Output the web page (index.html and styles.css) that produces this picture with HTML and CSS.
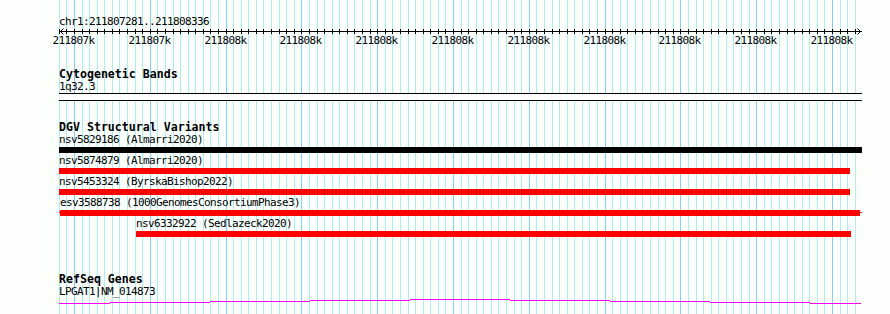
FILE: index.html
```html
<!DOCTYPE html>
<html lang="en">
<head>
<meta charset="utf-8">
<title>Genome browser</title>
<link rel="stylesheet" href="styles.css">
</head>
<body>
<div class="view">
  <svg class="grid" width="890" height="314" viewBox="0 0 890 314" aria-hidden="true">
    <path class="grid-minor" d="M59.5 0V314M66.5 0V314M82.5 0V314M89.5 0V314M97.5 0V314M104.5 0V314M112.5 0V314M119.5 0V314M127.5 0V314M135.5 0V314M142.5 0V314M157.5 0V314M165.5 0V314M173.5 0V314M180.5 0V314M188.5 0V314M195.5 0V314M203.5 0V314M210.5 0V314M218.5 0V314M233.5 0V314M241.5 0V314M248.5 0V314M256.5 0V314M263.5 0V314M271.5 0V314M279.5 0V314M286.5 0V314M294.5 0V314M309.5 0V314M317.5 0V314M324.5 0V314M332.5 0V314M339.5 0V314M347.5 0V314M354.5 0V314M362.5 0V314M370.5 0V314M385.5 0V314M392.5 0V314M400.5 0V314M408.5 0V314M415.5 0V314M423.5 0V314M430.5 0V314M438.5 0V314M445.5 0V314M461.5 0V314M468.5 0V314M476.5 0V314M483.5 0V314M491.5 0V314M498.5 0V314M506.5 0V314M514.5 0V314M521.5 0V314M536.5 0V314M544.5 0V314M552.5 0V314M559.5 0V314M567.5 0V314M574.5 0V314M582.5 0V314M589.5 0V314M597.5 0V314M612.5 0V314M620.5 0V314M627.5 0V314M635.5 0V314M642.5 0V314M650.5 0V314M658.5 0V314M665.5 0V314M673.5 0V314M688.5 0V314M696.5 0V314M703.5 0V314M711.5 0V314M718.5 0V314M726.5 0V314M733.5 0V314M741.5 0V314M749.5 0V314M764.5 0V314M771.5 0V314M779.5 0V314M787.5 0V314M794.5 0V314M802.5 0V314M809.5 0V314M817.5 0V314M824.5 0V314M840.5 0V314M847.5 0V314M855.5 0V314"/>
    <path class="grid-major" d="M74.5 0V314M150.5 0V314M226.5 0V314M301.5 0V314M377.5 0V314M453.5 0V314M529.5 0V314M605.5 0V314M680.5 0V314M756.5 0V314M832.5 0V314"/>
  </svg>

  <div class="tracks">
    <div class="locus">chr1:211807281..211808336</div>

    <svg class="ruler" width="803" height="20" viewBox="59 28 803 20">
      <path class="ruler-axis" d="M59 31.5H862M63.5 28.5L60.5 31.5L63.5 34.5M857.5 28.5L860.5 31.5L857.5 34.5"/>
      <path class="ruler-ticks" d="M59.5 29V34M66.5 29V34M74.5 29V34M82.5 29V34M89.5 29V34M97.5 29V34M104.5 29V34M112.5 29V34M119.5 29V34M127.5 29V34M135.5 29V34M142.5 29V34M150.5 29V34M157.5 29V34M165.5 29V34M173.5 29V34M180.5 29V34M188.5 29V34M195.5 29V34M203.5 29V34M210.5 29V34M218.5 29V34M226.5 29V34M233.5 29V34M241.5 29V34M248.5 29V34M256.5 29V34M263.5 29V34M271.5 29V34M279.5 29V34M286.5 29V34M294.5 29V34M301.5 29V34M309.5 29V34M317.5 29V34M324.5 29V34M332.5 29V34M339.5 29V34M347.5 29V34M354.5 29V34M362.5 29V34M370.5 29V34M377.5 29V34M385.5 29V34M392.5 29V34M400.5 29V34M408.5 29V34M415.5 29V34M423.5 29V34M430.5 29V34M438.5 29V34M445.5 29V34M453.5 29V34M461.5 29V34M468.5 29V34M476.5 29V34M483.5 29V34M491.5 29V34M498.5 29V34M506.5 29V34M514.5 29V34M521.5 29V34M529.5 29V34M536.5 29V34M544.5 29V34M552.5 29V34M559.5 29V34M567.5 29V34M574.5 29V34M582.5 29V34M589.5 29V34M597.5 29V34M605.5 29V34M612.5 29V34M620.5 29V34M627.5 29V34M635.5 29V34M642.5 29V34M650.5 29V34M658.5 29V34M665.5 29V34M673.5 29V34M680.5 29V34M688.5 29V34M696.5 29V34M703.5 29V34M711.5 29V34M718.5 29V34M726.5 29V34M733.5 29V34M741.5 29V34M749.5 29V34M756.5 29V34M764.5 29V34M771.5 29V34M779.5 29V34M787.5 29V34M794.5 29V34M802.5 29V34M809.5 29V34M817.5 29V34M824.5 29V34M832.5 29V34M840.5 29V34M847.5 29V34M855.5 29V34"/>
      <g class="ruler-labels">
        <text x="52.5" y="44">211807k</text>
        <text x="128.5" y="44">211807k</text>
        <text x="204.5" y="44">211808k</text>
        <text x="279.5" y="44">211808k</text>
        <text x="355.5" y="44">211808k</text>
        <text x="431.5" y="44">211808k</text>
        <text x="507.5" y="44">211808k</text>
        <text x="583.5" y="44">211808k</text>
        <text x="658.5" y="44">211808k</text>
        <text x="734.5" y="44">211808k</text>
        <text x="810.5" y="44">211808k</text>
      </g>
    </svg>

    <section class="track track-cyto">
      <h2 class="track-title">Cytogenetic Bands</h2>
      <div class="label label-tight">1q32.3</div>
      <div class="band"></div>
    </section>

    <section class="track track-dgv">
      <h2 class="track-title">DGV Structural Variants</h2>
      <div class="feature" style="margin-left:0px">
        <div class="label">nsv5829186 (Almarri2020)</div>
        <div class="bar bar-black" style="width:803px"></div>
      </div>
      <div class="feature" style="margin-left:0px">
        <div class="label">nsv5874879 (Almarri2020)</div>
        <div class="bar" style="width:791px"></div>
      </div>
      <div class="feature" style="margin-left:0px">
        <div class="label">nsv5453324 (ByrskaBishop2022)</div>
        <div class="bar" style="width:791px"></div>
      </div>
      <div class="feature" style="margin-left:0px">
        <div class="label label-inset">esv3588738 (1000GenomesConsortiumPhase3)</div>
        <div class="bar bar-overflow" style="width:803px"><div class="bar-core"></div></div>
      </div>
      <div class="feature" style="margin-left:77px">
        <div class="label">nsv6332922 (Sedlazeck2020)</div>
        <div class="bar" style="width:715px"></div>
      </div>
    </section>

    <section class="track track-refseq">
      <h2 class="track-title">RefSeq Genes</h2>
      <div class="label">LPGAT1|NM_014873</div>
      <svg class="gene" width="803" height="8" viewBox="59 298 803 8">
        <path class="gene-line" d="M59 303.5H110M110 302.5H210M210 301.5H310M310 300.5H410M410 299.5H510M510 300.5H610M610 301.5H710M710 302.5H810M810 303.5H861"/>
      </svg>
    </section>
  </div>
</div>
</body>
</html>
```

FILE: styles.css
```css
html, body {
  margin: 0;
  padding: 0;
  background: #fdfffd;
}

.view {
  position: relative;
  width: 890px;
  height: 314px;
  overflow: hidden;
  font-family: "DejaVu Sans Mono", "Liberation Mono", monospace;
  color: #000;
}

.grid {
  position: absolute;
  left: 0;
  top: 0;
  z-index: 0;
}

.grid-minor {
  stroke: #afeeee;
  stroke-width: 1;
  fill: none;
  shape-rendering: crispEdges;
}

.grid-major {
  stroke: #87cefa;
  stroke-width: 1;
  fill: none;
  shape-rendering: crispEdges;
}

.tracks {
  position: relative;
  z-index: 1;
  display: flex;
  flex-direction: column;
  align-items: flex-start;
  width: 803px;
  padding-left: 59px;
}

.locus {
  padding-top: 16px;
  font-size: 11px;
  letter-spacing: -0.62px;
  line-height: 12px;
  white-space: nowrap;
}

.ruler {
  display: block;
  overflow: visible;
}

.ruler-axis {
  stroke: #000;
  stroke-width: 1;
  fill: none;
}

.ruler-ticks {
  stroke: #000;
  stroke-width: 1;
  fill: none;
  shape-rendering: crispEdges;
}

.ruler-labels text {
  font-family: "DejaVu Sans Mono", "Liberation Mono", monospace;
  font-size: 11px;
  letter-spacing: -0.62px;
  fill: #000;
}

.track {
  display: flex;
  flex-direction: column;
  align-items: flex-start;
  width: 803px;
}

.track-title {
  margin: 0;
  font-size: 11.6px;
  font-weight: bold;
  line-height: 11px;
  white-space: nowrap;
}

.label {
  font-size: 11px;
  letter-spacing: -0.62px;
  line-height: 12px;
  white-space: nowrap;
}

.label-tight {
  margin-top: 1px;
  line-height: 11px;
}

.label-inset {
  padding-left: 1px;
}

.track-cyto {
  margin-top: 21px;
}

.band {
  align-self: stretch;
  margin-top: 1px;
  height: 6px;
  border-top: 1px solid #000;
  border-bottom: 1px solid #000;
  background: #ffffff;
}

.track-dgv {
  margin-top: 21px;
}

.track-dgv .track-title {
  margin-bottom: 1px;
}

.feature {
  display: flex;
  flex-direction: column;
  align-items: flex-start;
  padding-bottom: 2px;
}

.bar {
  height: 6px;
  margin-top: 1px;
  background: #ff0000;
}

.bar-black {
  background: #000;
}

.bar-overflow {
  display: flex;
  background: linear-gradient(#ff0000, #ff0000) 0 2px / 100% 1px no-repeat;
}

.bar-core {
  flex: 1;
  margin: 0 2px 0 1px;
  background: #ff0000;
}

.track-refseq {
  margin-top: 35px;
}

.track-refseq .track-title {
  margin-bottom: 1px;
}

.gene {
  display: block;
}

.gene-line {
  stroke: #ff00ff;
  stroke-width: 1;
  fill: none;
  shape-rendering: crispEdges;
}
```
